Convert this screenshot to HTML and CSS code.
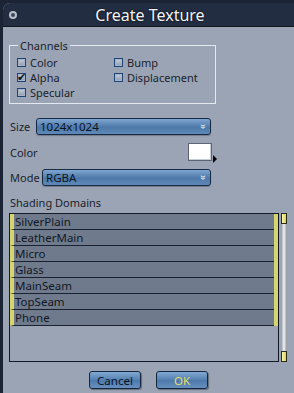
FILE: index.html
```html
<!DOCTYPE html>
<html lang="en">
<head>
  <meta charset="UTF-8" />
  <title>Create Texture</title>
  <link rel="stylesheet" href="styles.css">
</head>
<body>
  <div class="window">
    <div class="titlebar">
      <span class="close"></span>
      <span class="title">Create Texture</span>
    </div>

    <div class="content">
      <fieldset class="channels">
        <legend>Channels</legend>
        <div class="checks">
          <label class="check"><span class="box"></span>Color</label>
          <label class="check"><span class="box"></span>Bump</label>
          <label class="check"><span class="box checked">&#10004;</span>Alpha</label>
          <label class="check"><span class="box"></span>Displacement</label>
          <label class="check"><span class="box"></span>Specular</label>
        </div>
      </fieldset>

      <div class="field size-row">
        <span class="field-label">Size</span>
        <div class="select size-select">1024x1024<span class="arrows">&#187;</span></div>
      </div>

      <div class="field color-row">
        <span class="field-label">Color</span>
        <div class="swatch"></div>
        <span class="swatch-arrow"></span>
      </div>

      <div class="field mode-row">
        <span class="field-label">Mode</span>
        <div class="select mode-select">RGBA<span class="arrows">&#187;</span></div>
      </div>

      <div class="list-label">Shading Domains</div>
      <div class="list-wrap">
        <div class="list">
          <div class="item">SilverPlain</div>
          <div class="item">LeatherMain</div>
          <div class="item">Micro</div>
          <div class="item">Glass</div>
          <div class="item">MainSeam</div>
          <div class="item">TopSeam</div>
          <div class="item">Phone</div>
        </div>
        <div class="scrollbar">
          <span class="thumb"></span>
          <span class="thumb"></span>
        </div>
      </div>

      <div class="buttons">
        <button class="btn">Cancel</button>
        <button class="btn btn-ok">OK</button>
      </div>
    </div>
  </div>
</body>
</html>
```

FILE: styles.css
```css
* {
  box-sizing: border-box;
}

body {
  margin: 0;
  height: 393px;
  overflow: hidden;
  background-color: #1b2435;
  font-family: 'Noto Sans', 'Open Sans', sans-serif;
  font-size: 11px;
  color: #1a1f2a;
}

.window {
  margin: 3px 0 0 3px;
  width: 300px;
  height: 400px;
  background-color: #9ba4b5;
  border-radius: 7px 0 0 9px;
  overflow: hidden;
}

.titlebar {
  height: 24px;
  background-color: #222d42;
  border-bottom: 1px solid #10151f;
  display: flex;
  align-items: center;
}

.close {
  width: 8px;
  height: 8px;
  margin-left: 6px;
  border-radius: 50%;
  border: 2px solid #b9bec8;
  background-color: #3c465a;
}

.title {
  flex: 1;
  text-align: center;
  padding-right: 20px;
  color: #f2f4f8;
  font-size: 16px;
  text-shadow: 0 0 2px #000;
}

.content {
  padding: 11px 0 0 6px;
  width: 291px;
}

.channels {
  margin: 0;
  width: 207px;
  height: 66px;
  padding: 2px 0 0 7px;
  border: 1px solid #e4e8ef;
}

.channels legend {
  padding: 0 2px;
  margin-left: 1px;
  font-size: 11px;
}

.checks {
  display: grid;
  grid-template-columns: 97px 1fr;
  row-gap: 1px;
}

.check {
  display: flex;
  align-items: center;
  gap: 4px;
  height: 14px;
}

.box {
  width: 9px;
  height: 9px;
  border: 1px solid #1d4677;
  background: linear-gradient(#c9d0dc, #8e9aad);
  box-shadow: inset 0 0 0 1px #a9b3c3;
  font-size: 11px;
  line-height: 6px;
  color: #0d1624;
}

.box.checked {
  text-indent: -1px;
}

.field {
  display: flex;
  align-items: center;
  width: 202px;
}

.size-row {
  margin-top: 14px;
}

.color-row {
  margin-top: 8px;
  height: 18px;
  width: 208px;
}

.mode-row {
  margin-top: 8px;
}

.field-label {
  padding-left: 1px;
}

.select {
  margin-left: auto;
  height: 17px;
  width: 175px;
  border: 1px solid #172a45;
  border-radius: 3px;
  background: linear-gradient(#7fa6d1, #4d78a8 55%, #5f89b8);
  color: #0c1422;
  padding-left: 3px;
  line-height: 15px;
  font-size: 11.5px;
  display: flex;
  justify-content: space-between;
  box-shadow: 0 1px 1px rgba(0, 0, 0, 0.25);
}

.mode-select {
  width: 169px;
}

.arrows {
  transform: rotate(90deg);
  font-size: 10px;
  color: #e8eef6;
  width: 10px;
  text-align: center;
  margin-right: 2px;
}

.swatch {
  margin-left: auto;
  width: 24px;
  height: 18px;
  background: #ffffff;
  border: 1px solid #5c6475;
  box-shadow: inset -1px -1px 0 #c8ccd4;
}

.swatch-arrow {
  width: 0;
  height: 0;
  align-self: flex-end;
  margin: 0 0 -2px 1px;
  border-top: 4px solid transparent;
  border-bottom: 4px solid transparent;
  border-left: 4px solid #000;
}

.list-label {
  margin-top: 9px;
  padding-left: 1px;
}

.list-wrap {
  display: flex;
  gap: 2px;
  margin-top: 3px;
}

.list {
  width: 270px;
  height: 149px;
  border: 1px solid #121a28;
  padding: 0 4px 0 0;
  background-color: #9ba4b5;
}

.list .item {
  height: 16px;
  line-height: 15px;
  padding-left: 1px;
  font-size: 11.5px;
  background-color: #6f7b8d;
  border-bottom: 1px solid #1a2232;
  border-left: 4px solid #d6d46c;
  color: #121722;
  position: relative;
}

.list .item::after {
  content: "";
  position: absolute;
  right: -4px;
  top: 0;
  bottom: -1px;
  width: 4px;
  background-color: #d6d46c;
}

.scrollbar {
  width: 6px;
  height: 149px;
  background: linear-gradient(90deg, #9097a3, #f3f4f6 50%, #8b919c);
  display: flex;
  flex-direction: column;
  justify-content: space-between;
}

.thumb {
  height: 11px;
  background: linear-gradient(90deg, #fbf7a8, #d8d35a);
  border: 1px solid #2a2d1a;
}

.buttons {
  display: flex;
  justify-content: center;
  gap: 15px;
  margin-top: 9px;
  padding-right: 6px;
}

.btn {
  width: 52px;
  height: 18px;
  padding: 0;
  border: 1px solid #14263f;
  border-radius: 3px;
  background: linear-gradient(#82a9d3, #4e7aab 55%, #6790bf);
  color: #0c1422;
  font-family: 'Noto Sans', 'Open Sans', sans-serif;
  font-size: 11.5px;
  box-shadow: 1px 1px 1px rgba(0, 0, 0, 0.35);
}

.btn-ok {
  color: #e2dd6c;
}
```
